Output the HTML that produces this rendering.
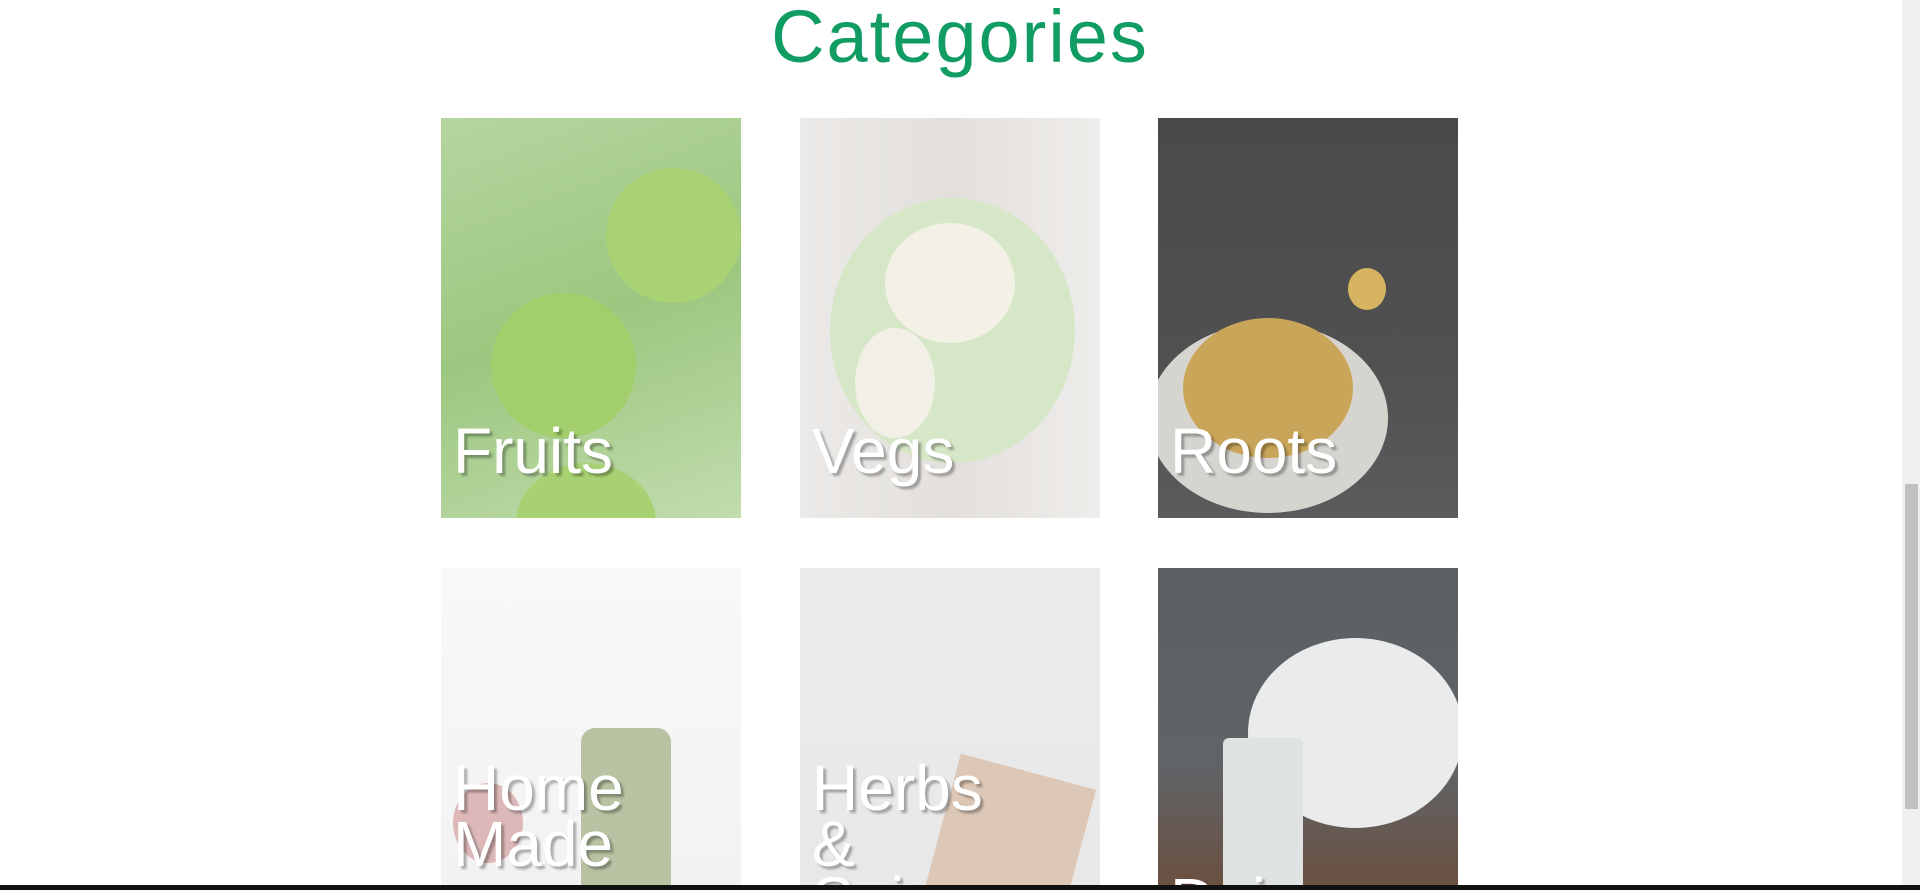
<!DOCTYPE html>
<html><head><meta charset="utf-8"><style>
html,body{margin:0;padding:0;width:1920px;height:890px;overflow:hidden;background:#fff;font-family:"Liberation Sans",sans-serif}
#wrap{position:relative;width:1920px;height:890px;overflow:hidden}
h1{position:absolute;left:0;width:1920px;top:-6px;margin:0;text-align:center;font-size:74px;font-weight:400;letter-spacing:2px;color:#119c64}
.card{position:absolute;width:300px;height:400px;overflow:hidden}
.lab{position:absolute;left:12px;color:#fff;font-size:64px;line-height:56px;text-shadow:3px 3px 2px rgba(0,0,0,.3)}
.c{position:absolute;border-radius:50%}
#sb{position:absolute;left:1902px;top:0;width:18px;height:885px;background:#f0f0f0}
#th{position:absolute;left:1905px;top:484px;width:13px;height:325px;background:#c0c0c0}
#bb{position:absolute;left:0;top:885px;width:1920px;height:5px;background:#111}
</style></head><body><div id="wrap">
<h1>Categories</h1>

<div class="card" style="left:441px;top:118px;background:linear-gradient(160deg,#b5d6a0,#9cc77f 50%,#c2dcae)">
<div class="c" style="left:165px;top:50px;width:135px;height:135px;background:#a8d274"></div>
<div class="c" style="left:50px;top:175px;width:145px;height:145px;background:#a2cf6c"></div>
<div class="c" style="left:75px;top:345px;width:140px;height:120px;background:#a7d172"></div>
<div class="lab" style="top:305px">Fruits</div></div>

<div class="card" style="left:800px;top:118px;background:linear-gradient(90deg,#eceae8,#e2dfdc,#efedeb)">
<div class="c" style="left:30px;top:80px;width:245px;height:265px;background:#d6e7c7"></div>
<div class="c" style="left:85px;top:105px;width:130px;height:120px;background:#f3f0e6"></div>
<div class="c" style="left:55px;top:210px;width:80px;height:110px;background:#f2efe6"></div>
<div class="lab" style="top:305px">Vegs</div></div>

<div class="card" style="left:1158px;top:118px;background:linear-gradient(180deg,#4a4a4a,#505050 60%,#5a5b5d)">
<div class="c" style="left:-10px;top:205px;width:240px;height:190px;background:#d6d4cf"></div>
<div class="c" style="left:25px;top:200px;width:170px;height:140px;background:#c9a55a"></div>
<div class="c" style="left:190px;top:150px;width:38px;height:42px;background:#d7b462"></div>
<div class="lab" style="top:305px">Roots</div></div>

<div class="card" style="left:441px;top:568px;height:322px;background:linear-gradient(180deg,#f8f8f8,#f6f6f6 40%,#f2f2f2)">
<div style="position:absolute;left:140px;top:160px;width:90px;height:240px;background:#b7c3a2;border-radius:14px"></div>
<div class="c" style="left:12px;top:215px;width:70px;height:80px;background:#dcb8b8"></div>
<div class="lab" style="top:192px">Home<br>Made</div></div>

<div class="card" style="left:800px;top:568px;height:322px;background:linear-gradient(180deg,#ebebeb,#e8e8e8)">
<div style="position:absolute;left:130px;top:200px;width:140px;height:220px;background:#ddc7b6;transform:rotate(15deg)"></div>
<div class="lab" style="top:192px">Herbs<br>&amp;<br>Spices</div></div>

<div class="card" style="left:1158px;top:568px;height:322px;background:linear-gradient(180deg,#5b5f63,#606468 60%,#6a5040)">
<div class="c" style="left:90px;top:70px;width:215px;height:190px;background:#e9ecea"></div>
<div style="position:absolute;left:65px;top:170px;width:80px;height:240px;background:#dfe3e2;border-radius:6px"></div>
<div class="lab" style="top:305px">Dairy</div></div>

<div id="sb"></div><div id="th"></div><div id="bb"></div>
</div></body></html>
